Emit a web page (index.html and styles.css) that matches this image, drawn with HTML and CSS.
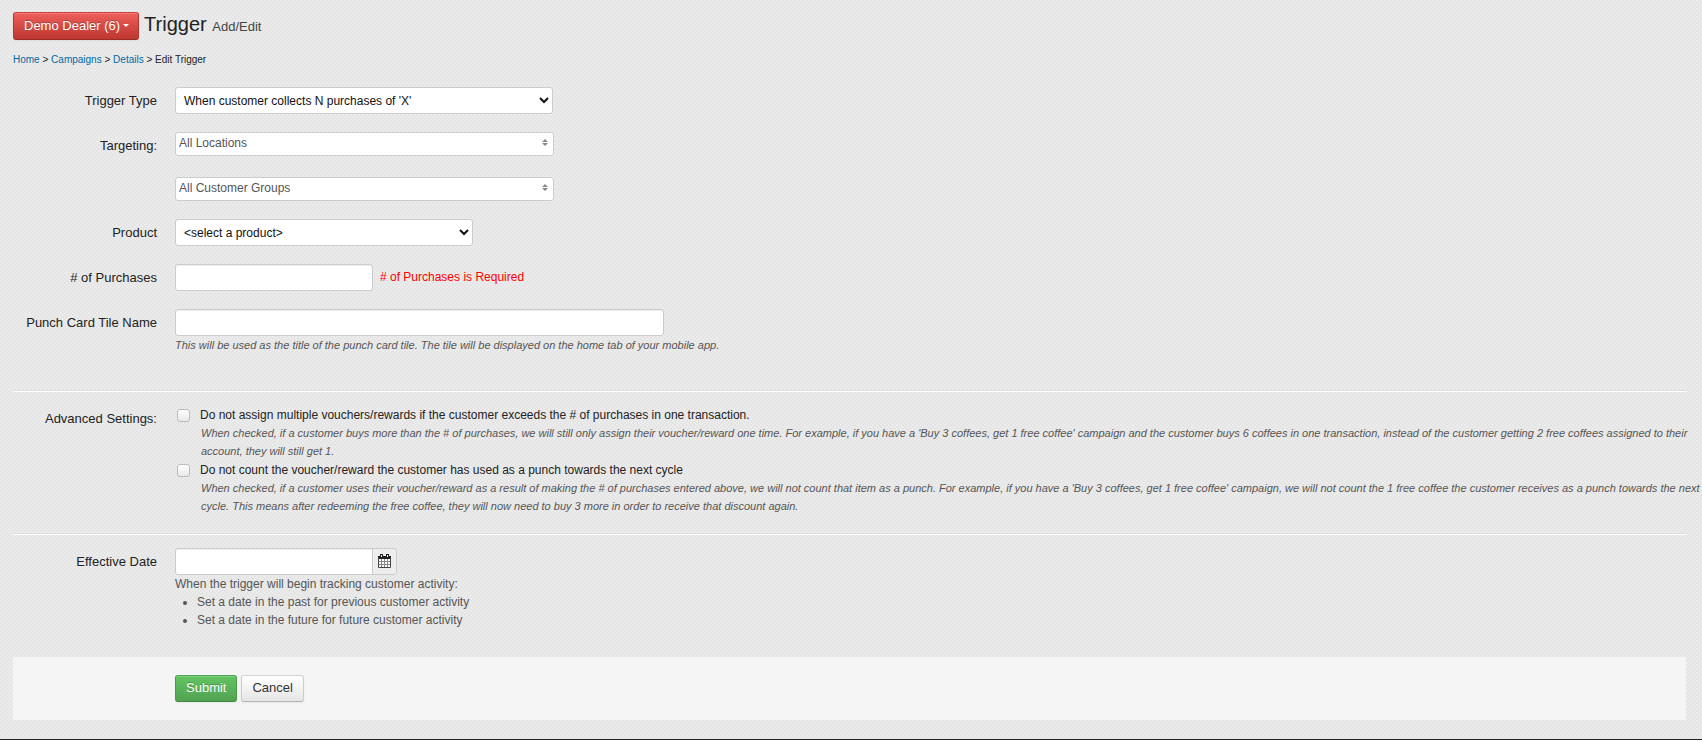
FILE: index.html
```html
<!DOCTYPE html>
<html lang="en">
<head>
<meta charset="utf-8">
<title>Trigger Add/Edit</title>
<link rel="stylesheet" href="styles.css">
</head>
<body>
<main class="page">
  <header class="page-header">
    <button class="btn btn-danger" type="button">Demo Dealer (6)<span class="caret"></span></button>
    <h1 class="title">Trigger <small class="subtitle">Add/Edit</small></h1>
  </header>
  <nav class="breadcrumb"><a href="#">Home</a> &gt; <a href="#">Campaigns</a> &gt; <a href="#">Details</a> &gt; Edit Trigger</nav>
  <form class="form">
    <div class="row">
      <label class="label" for="type">Trigger Type</label>
      <div><select class="control w-type" id="type"><option>When customer collects N purchases of 'X'</option></select></div>
    </div>
    <div class="row">
      <label class="label" for="locations">Targeting:</label>
      <div class="stack">
        <div class="picker">
          <select class="picker-select" id="locations"><option>All Locations</option></select>
          <svg class="picker-icon" width="6" height="7" viewBox="0 0 6 7"><path d="M3 0 6 3H0zM3 7 6 4H0z"/></svg>
        </div>
        <div class="picker">
          <select class="picker-select" aria-label="Customer groups"><option>All Customer Groups</option></select>
          <svg class="picker-icon" width="6" height="7" viewBox="0 0 6 7"><path d="M3 0 6 3H0zM3 7 6 4H0z"/></svg>
        </div>
      </div>
    </div>
    <div class="row">
      <label class="label" for="product">Product</label>
      <div><select class="control w-product" id="product"><option>&lt;select a product&gt;</option></select></div>
    </div>
    <div class="row">
      <label class="label" for="count">&#35; of Purchases</label>
      <div class="inline"><input class="control w-count" id="count" type="text"><span class="error"># of Purchases is Required</span></div>
    </div>
    <div class="row">
      <label class="label" for="tile">Punch Card Tile Name</label>
      <div>
        <input class="control w-tile" id="tile" type="text">
        <p class="help">This will be used as the title of the punch card tile. The tile will be displayed on the home tab of your mobile app.</p>
      </div>
    </div>
    <section class="row section">
      <span class="label">Advanced Settings:</span>
      <div class="options">
        <div class="option">
          <input class="check" type="checkbox" id="single"><label class="option-label" for="single">Do not assign multiple vouchers/rewards if the customer exceeds the # of purchases in one transaction.</label>
          <p class="option-help">When checked, if a customer buys more than the # of purchases, we will still only assign their voucher/reward one time. For example, if you have a 'Buy 3 coffees, get 1 free coffee' campaign and the customer buys 6 coffees in one transaction, instead of the customer getting 2 free coffees assigned to their account, they will still get 1.</p>
        </div>
        <div class="option">
          <input class="check" type="checkbox" id="nocount"><label class="option-label" for="nocount">Do not count the voucher/reward the customer has used as a punch towards the next cycle</label>
          <p class="option-help">When checked, if a customer uses their voucher/reward as a result of making the # of purchases entered above, we will not count that item as a punch. For example, if you have a 'Buy 3 coffees, get 1 free coffee' campaign, we will not count the 1 free coffee the customer receives as a punch towards the next cycle. This means after redeeming the free coffee, they will now need to buy 3 more in order to receive that discount again.</p>
        </div>
      </div>
    </section>
    <section class="row section section-date">
      <label class="label" for="date">Effective Date</label>
      <div>
        <div class="inline">
          <input class="control w-date" id="date" type="text">
          <button class="addon" type="button" aria-label="Pick a date">
            <svg width="13" height="14" viewBox="0 0 13 14"><path fill="#fff" d="M1 5h11v8H1z"/><path fill="#222" d="M0 2h13v3H0zM2 0h3v3H2zM8 0h3v3H8z"/><path fill="#eee" d="M3 1h1v2H3zM9 1h1v2H9z"/><path fill="none" stroke="#444" d="M.5 4v9.500h12V4"/><path fill="none" stroke="#888" d="M3.500 5v8M6.500 5v8M9.500 5v8M1 7.500h11M1 10.500h11"/></svg>
          </button>
        </div>
        <div class="date-help">When the trigger will begin tracking customer activity:
          <ul class="date-list">
            <li>Set a date in the past for previous customer activity</li>
            <li>Set a date in the future for future customer activity</li>
          </ul>
        </div>
      </div>
    </section>
    <div class="actions">
      <button class="btn btn-success" type="submit">Submit</button>
      <button class="btn btn-default" type="button">Cancel</button>
    </div>
  </form>
</main>
</body>
</html>
```
FILE: styles.css
```css
* { box-sizing: border-box; }
body {
  margin: 0;
  min-height: 100vh;
  border-bottom: 1px solid #222;
  font: 12px/18px "Liberation Sans", Arial, sans-serif;
  color: #222;
  background-color: #ebebeb;
  background-image: conic-gradient(#e5e5e5 25%, transparent 0 50%, #e5e5e5 0 75%, transparent 0);
  background-size: 4px 4px;
}
.page { padding: 12px 16px 18px 13px; }
.page-header { display: flex; align-items: center; gap: 5px; height: 28px; }
.title { margin: 0 0 2px; font-size: 20px; line-height: 24px; font-weight: normal; }
.subtitle { font-size: 13px; color: #444; }
.breadcrumb { margin-top: 11px; font-size: 10px; line-height: 18px; }
.breadcrumb a { color: #0069a6; text-decoration: none; }

.btn {
  height: 27px;
  padding: 0 10px 1px;
  border: 1px solid;
  border-radius: 3px;
  font: 13px/18px "Liberation Sans", Arial, sans-serif;
  box-shadow: inset 0 1px 0 rgba(255,255,255,.2), 0 1px 2px rgba(0,0,0,.05);
}
.btn-danger {
  display: flex; align-items: center; gap: 3px;
  height: 28px;
  padding: 0 9px 1px 10px;
  color: #fff;
  background: linear-gradient(#ee5f5b, #bd362f);
  border-color: #c9413c #b5362f #9c2a25;
  text-shadow: 0 -1px 0 rgba(0,0,0,.25);
}
.caret { border: 3px solid transparent; border-top-color: #fff; border-bottom: 0; }
.btn-success {
  color: #fff;
  background: linear-gradient(#62c462, #51a351);
  border-color: #4fa54f #4a9a4a #3f8a3f;
  text-shadow: 0 -1px 0 rgba(0,0,0,.25);
}
.btn-default {
  color: #333;
  background: linear-gradient(#fff, #e6e6e6);
  border-color: #d4d4d4 #ccc #b3b3b3;
}

.form { display: flex; flex-direction: column; gap: 18px; margin-top: 18px; }
.row { display: grid; grid-template-columns: 144px minmax(0, 1fr); gap: 18px; }
.label { padding-top: 5px; font-size: 13px; line-height: 18px; text-align: right; }
.inline { display: flex; }
.control {
  display: block;
  height: 27px;
  padding: 4px;
  border: 1px solid #ccc;
  border-radius: 3px;
  background-color: #fff;
  font: 12px/18px "Liberation Sans", Arial, sans-serif;
  color: #111;
}
input.control { box-shadow: inset 0 1px 1px rgba(0,0,0,.075); }
.w-type { width: 378px; }
.w-product { width: 298px; }
.w-count { width: 198px; }
.w-tile { width: 489px; }
.w-date { width: 198px; border-radius: 3px 0 0 3px; }
.error { padding: 4px 7px; color: #f00; }
.help { margin: 0; font-size: 11px; line-height: 18px; font-style: italic; color: #555; }

.stack { display: grid; gap: 21px; width: 379px; }
.picker { display: grid; align-items: center; }
.picker-select, .picker-icon { grid-area: 1 / 1; }
.picker-select {
  appearance: none;
  height: 24px;
  padding: 0 3px 2px;
  border: 1px solid #ccc;
  border-radius: 3px;
  background: #fff;
  font: 12px/18px "Liberation Sans", Arial, sans-serif;
  color: #555;
}
.picker-icon { justify-self: end; margin: 0 6px 3px 0; fill: #888; pointer-events: none; }

.section {
  margin-top: 18px;
  border-top: 1px solid #ddd;
  box-shadow: inset 0 1px 0 #fff;
  padding-top: 14px;
}
.options { display: grid; gap: 1px; margin-right: -16px; padding-top: 1px; }
.option { display: grid; grid-template-columns: 13px 1fr; column-gap: 10px; padding-left: 2px; }
.check {
  appearance: none;
  width: 13px;
  height: 13px;
  margin: 3px 0 0;
  border: 1px solid #bbb;
  border-radius: 3px;
  background: linear-gradient(#fff, #e9e9e9);
}
.option-help {
  grid-column: 1 / -1;
  margin: 0;
  padding-left: 24px;
  font-size: 11px;
  line-height: 18px;
  font-style: italic;
  color: #555;
}
.section-date { margin-top: 0; }
.addon {
  display: grid; place-items: center;
  width: 25px;
  margin-left: -1px;
  padding: 0 0 2px;
  border: 1px solid #ccc;
  border-radius: 0 3px 3px 0;
  background: #eee;
}
.date-help { color: #555; }
.date-list { margin: 0; padding-left: 22px; }
.actions {
  display: flex;
  gap: 4px;
  margin-top: 10px;
  padding: 18px 0 18px 162px;
  background: #f5f5f5;
}
```
